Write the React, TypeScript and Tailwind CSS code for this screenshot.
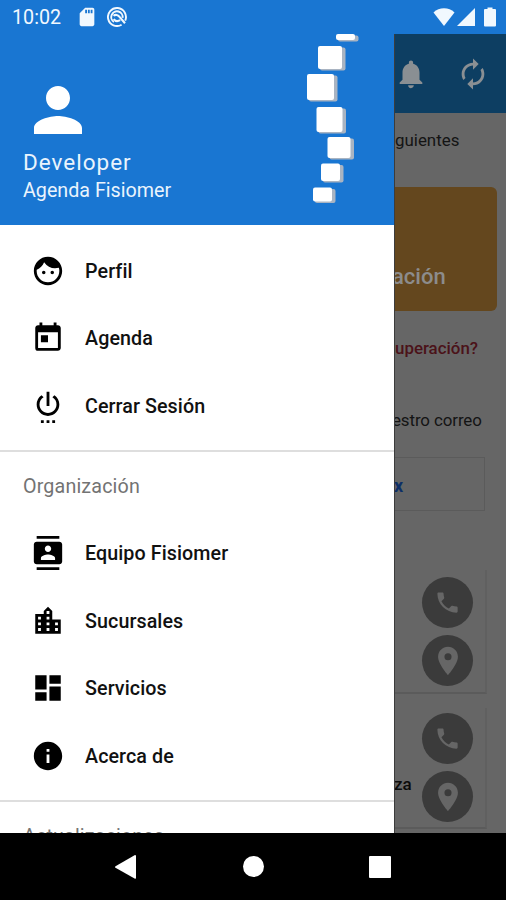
import type { ReactNode } from "react";
import type { IconType } from "react-icons";
import {
  MdAutorenew,
  MdContacts,
  MdDashboard,
  MdFace,
  MdInfo,
  MdLocationCity,
  MdNotifications,
  MdPerson,
  MdPhone,
  MdPlace,
  MdSdCard,
  MdSettingsPower,
  MdToday,
} from "react-icons/md";

type Item = { label: string; icon: IconType };

const accountItems: Item[] = [
  { label: "Perfil", icon: MdFace },
  { label: "Agenda", icon: MdToday },
  { label: "Cerrar Sesión", icon: MdSettingsPower },
];

const organizationItems: Item[] = [
  { label: "Equipo Fisiomer", icon: MdContacts },
  { label: "Sucursales", icon: MdLocationCity },
  { label: "Servicios", icon: MdDashboard },
  { label: "Acerca de", icon: MdInfo },
];

export default function App() {
  return (
    <div className="flex h-[900px] w-[506px] flex-col overflow-hidden bg-black font-['Roboto','Noto_Sans',sans-serif]">
      <StatusBar />
      <div className="flex min-h-0 flex-1 overflow-hidden">
        <Drawer />
        <DimmedPage />
      </div>
      <NavigationBar />
    </div>
  );
}

function StatusBar() {
  return (
    <div className="flex h-[34px] shrink-0 items-center bg-[#1976d2] pl-3 pr-[10px] text-[#f1f8fe]">
      <span className="mt-[2px] w-[64px] text-[19.7px] leading-none">10:02</span>
      <MdSdCard className="size-[22px]" />
      <svg viewBox="0 0 20 20" className="ml-[9px] size-5" fill="none" stroke="currentColor">
        <path d="M14.6 17.700A9 9 0 1 1 18.200 13.600" strokeWidth="1.9" />
        <path d="M7 14.900A5.700 5.700 0 1 1 15.600 10.800" strokeWidth="1.9" />
        <path d="M6.500 8.800C8.500 7.200 11 7.800 12.300 9.600L18 16.300M6.800 12c1.400 2.200 4 2.600 6.400 1.200" strokeWidth="2.1" />
      </svg>
      <div className="ml-auto flex items-center">
        <svg viewBox="0 0 22 18" className="h-[18px] w-[22px]" fill="currentColor">
          <path d="M11 18 .5 4.5C3.500 1.700 7 .3 11 .3s7.500 1.400 10.500 4.200z" />
        </svg>
        <svg viewBox="0 0 18 18" className="ml-[2px] size-[18px]" fill="currentColor">
          <path d="M0 18 18 0v18z" />
        </svg>
        <svg viewBox="0 0 12 20" className="ml-[9px] h-5 w-3" fill="currentColor">
          <path d="M3.500 2V.5h5V2H11q1 0 1 1v15.500q0 1-1 1H1q-1 0-1-1V3q0-1 1-1z" />
        </svg>
      </div>
    </div>
  );
}

function Drawer() {
  return (
    <div className="relative z-10 flex w-[394px] shrink-0 flex-col overflow-hidden bg-white">
      <div className="flex h-[191px] shrink-0 justify-between bg-[#1976d2] pl-[23px] text-[#eaf4fd]">
        <div className="pt-[40px]">
          <MdPerson className="-ml-[1px] size-[72px] text-white" />
          <div className="mt-[3px] text-[22.5px] leading-[26px] tracking-[1px]">Developer</div>
          <div className="mt-[4px] text-[19.7px] leading-[24px]">Agenda Fisiomer</div>
        </div>
        <Spine />
      </div>

      <div className="h-[12px] shrink-0" />
      {accountItems.map((item) => (
        <DrawerItem key={item.label} {...item} />
      ))}
      <Divider />
      <Subheader>Organización</Subheader>
      {organizationItems.map((item) => (
        <DrawerItem key={item.label} {...item} />
      ))}
      <Divider />
      <Subheader>Actualizaciones</Subheader>
    </div>
  );
}

// Logo: a column of vertebrae with a soft grey edge
function Spine() {
  const blocks = [
    { x: 46, y: 0, w: 19, h: 6 },
    { x: 28, y: 12, w: 24, h: 23 },
    { x: 17, y: 40, w: 27, h: 26 },
    { x: 26.5, y: 73, w: 26, h: 25 },
    { x: 37.5, y: 103, w: 23, h: 21 },
    { x: 31, y: 129.5, w: 19, h: 17.5 },
    { x: 23, y: 153.5, w: 19, h: 14 },
  ];
  return (
    <svg viewBox="0 0 104 191" className="h-[191px] w-[104px]">
      {blocks.map((b) => (
        <g key={b.y}>
          <rect x={b.x + 2} y={b.y + 1.5} width={b.w + 1.5} height={b.h} rx="2" fill="#a9b4c2" />
          <rect x={b.x} y={b.y} width={b.w} height={b.h} rx="2" fill="#fff" />
        </g>
      ))}
    </svg>
  );
}

function DrawerItem({ label, icon: Icon }: Item) {
  return (
    <div className="flex h-[67.5px] shrink-0 items-center pl-[31px]">
      <Icon className="size-[34px] text-black" />
      <span className="ml-[20px] mt-[2px] text-[19.7px] font-medium tracking-[0.08px] text-[#111]">
        {label}
      </span>
    </div>
  );
}

function Divider() {
  return <div className="mt-[10px] h-[2px] shrink-0 bg-[#dedede]" />;
}

function Subheader({ children }: { children: ReactNode }) {
  return (
    <div className="flex h-[68px] shrink-0 items-center pl-[23px] pt-[2px] text-[19.7px] tracking-[0.15px] text-[#737373]">
      {children}
    </div>
  );
}

// Page behind the drawer, colours already darkened by the scrim
function DimmedPage() {
  return (
    <div className="flex min-w-0 flex-1 flex-col overflow-hidden border-l border-[#3c3c3c] bg-[#666] text-[#141414]">
      <div className="flex h-[79px] shrink-0 items-center bg-[#0d3e62] text-[#8a8f93]">
        <MdNotifications className="-ml-px size-[34px] shrink-0" />
        <MdAutorenew className="ml-[28px] size-[34px] shrink-0" />
      </div>
      <div className="mt-[15px] h-[24px] text-[16.9px] leading-[24px]">guientes</div>
      <div className="mt-[35px] flex h-[124px] w-[102px] shrink-0 items-end rounded-r-[6px] bg-[#64471e] pb-[20px] text-[22px] font-medium leading-[28px] text-[#8c8c8c]">
        <span className="-ml-[3px]">ación</span>
      </div>
      <div className="mt-[25px] text-[16.9px] font-medium leading-[24px] text-[#4b1219]">uperación?</div>
      <div className="-ml-[3px] mt-[48px] text-[16.9px] leading-[24px] tracking-[-0.1px]">estro correo</div>
      <div className="mt-[25px] flex h-[54px] w-[90px] shrink-0 items-center border border-l-0 border-[#5b5b5b] text-[18px] font-bold text-[#0d2f67]">
        <span className="-ml-px mt-[3px]">x</span>
      </div>
      <ContactCard className="mt-[59px] h-[124px] pt-[7px]" />
      <ContactCard className="mt-[14px] h-[121px] pt-[5px]" name="za" />
    </div>
  );
}

function ContactCard({ className, name }: { className: string; name?: string }) {
  return (
    <div
      className={`flex w-[92px] shrink-0 justify-between border-b-2 border-r-2 border-b-[#5b5b5b] border-r-[#606060] pr-[12px] ${className}`}
    >
      <span className="-ml-px mt-[59px] text-[17px] font-medium leading-[24px] text-[#0c0c0c]">
        {name}
      </span>
      <div className="flex flex-col gap-[7px] text-[#666]">
        <div className="flex size-[51px] items-center justify-center rounded-full bg-[#3b3b3b]">
          <MdPhone className="size-[27px]" />
        </div>
        <div className="flex size-[51px] items-center justify-center rounded-full bg-[#3b3b3b]">
          <MdPlace className="size-[34px]" />
        </div>
      </div>
    </div>
  );
}

function NavigationBar() {
  return (
    <div className="flex h-[67px] shrink-0 items-center bg-black text-white">
      <svg viewBox="0 0 21 24" className="ml-[115px] h-[24px] w-[21px]" fill="currentColor">
        <path d="M20 0q1 0 1 1v22q0 1-1 .8L.5 12.800q-1-.8 0-1.600z" />
      </svg>
      <div className="ml-[107px] size-[21px] rounded-full bg-white" />
      <div className="ml-[105px] size-[22px] rounded-[1px] bg-white" />
    </div>
  );
}
